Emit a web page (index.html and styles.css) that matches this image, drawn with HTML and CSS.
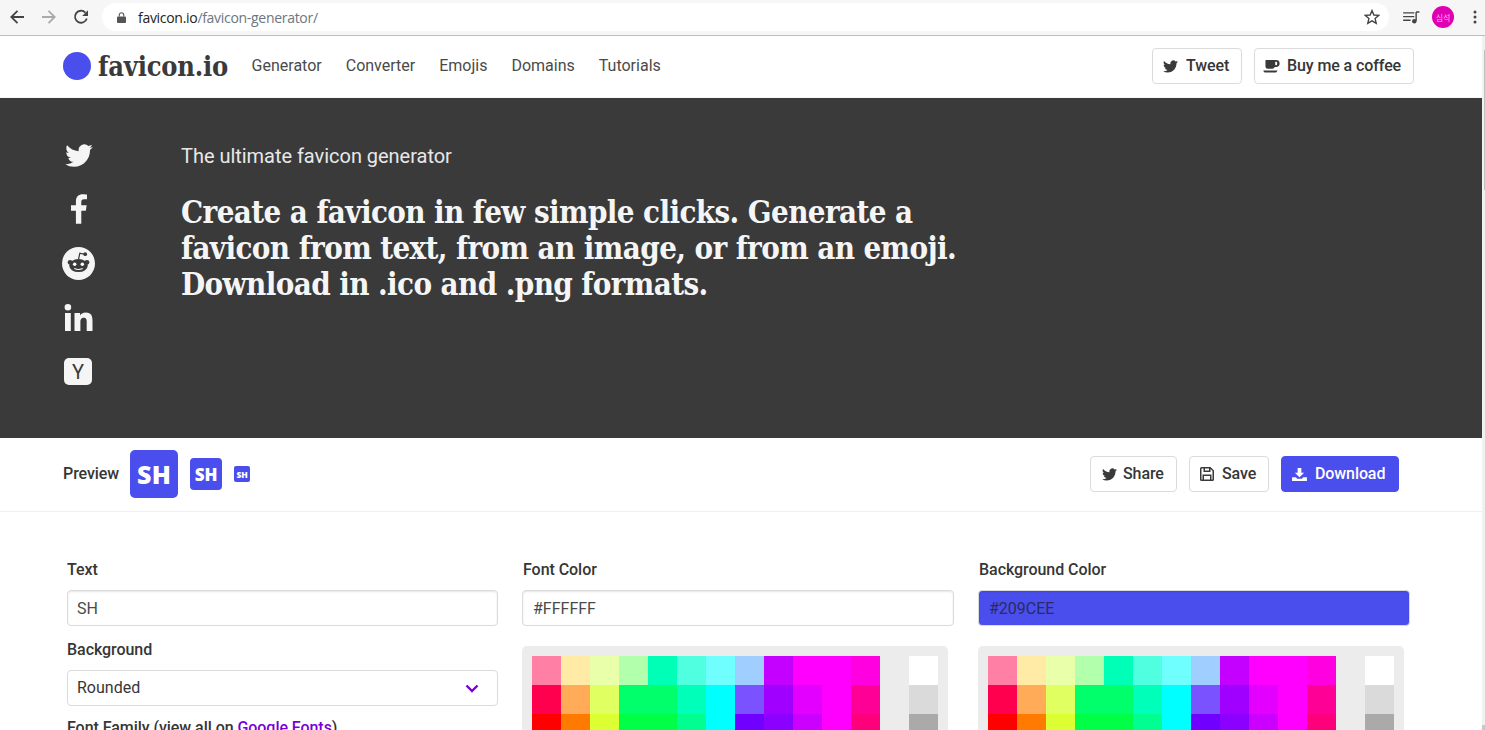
FILE: index.html
```html
<!DOCTYPE html>
<html lang="en">
<head>
<meta charset="utf-8">
<title>favicon.io</title>
<link rel="stylesheet" href="styles.css">
</head>
<body>
<div class="window">
  <header class="browser">
    <div class="browser-nav">
      <svg class="bicon" viewBox="0 0 16 16"><path d="M15 8H2.500M8.500 1.800 2.300 8l6.200 6.200" fill="none" stroke="#444" stroke-width="1.800"/></svg>
      <svg class="bicon" viewBox="0 0 16 16"><path d="M1 8h12.500M7.500 1.800 13.700 8l-6.200 6.200" fill="none" stroke="#aaa" stroke-width="1.800"/></svg>
      <svg class="bicon" viewBox="0 0 16 16"><path d="M13.800 9.400A6 6 0 1 1 12.400 3.600" fill="none" stroke="#444" stroke-width="1.800"/><path d="M15 1.200V7H9.200Z" fill="#444"/></svg>
    </div>
    <div class="omnibox">
      <svg class="lock" viewBox="0 0 10 12"><path d="M1 5h8a1 1 0 0 1 1 1v5a1 1 0 0 1-1 1H1a1 1 0 0 1-1-1V6a1 1 0 0 1 1-1Z" fill="#555"/><path d="M2.500 5V3.300a2.500 2.500 0 0 1 5 0V5" fill="none" stroke="#555" stroke-width="1.200"/></svg>
      <span class="url"><span class="url-host">favicon.io</span>/favicon-generator/</span>
      <svg class="star" viewBox="0 0 16 16"><path d="M8 1.600 9.900 6l4.800.4-3.600 3.200 1.100 4.700L8 11.800l-4.200 2.500 1.100-4.700-3.600-3.200L6.100 6Z" fill="none" stroke="#444" stroke-width="1.400"/></svg>
    </div>
    <svg class="queue" viewBox="0 0 18 14"><path d="M0 2h12M0 6h12M0 10h8" fill="none" stroke="#444" stroke-width="1.500"/><path d="M14 1h3.500M14 1v9.500" fill="none" stroke="#444" stroke-width="1.500"/><circle cx="12" cy="11" r="2.400" fill="#444"/></svg>
    <div class="avatar">심석</div>
    <svg class="kebab" viewBox="0 0 4 14"><circle cx="2" cy="2" r="1.500" fill="#444"/><circle cx="2" cy="7" r="1.500" fill="#444"/><circle cx="2" cy="12" r="1.500" fill="#444"/></svg>
  </header>

  <div class="viewport">
    <main class="page">
      <nav class="topnav">
        <div class="brand"><span class="brand-dot"></span><span class="brand-name">favicon.io</span></div>
        <a class="navlink">Generator</a>
        <a class="navlink">Converter</a>
        <a class="navlink">Emojis</a>
        <a class="navlink">Domains</a>
        <a class="navlink">Tutorials</a>
        <div class="nav-actions">
          <a class="btn btn-tweet"><svg class="ic-tw" viewBox="0 0 24 24"><use href="#bird"/></svg>Tweet</a>
          <a class="btn btn-coffee"><svg class="ic-coffee" viewBox="0 0 18 14"><path d="M3 0h11a3.500 3.500 0 0 1 0 7.500h-1.500A3 3 0 0 1 10 9.500H5A2.500 2.500 0 0 1 2.500 7V.5Z" fill="#3a3a3a"/><path d="M0 11.300h15.500l-1 1.700a1 1 0 0 1-.8.400H1.800a1 1 0 0 1-.8-.4Z" fill="#3a3a3a"/><rect x="13" y="2" width="2" height="3.500" fill="#fff"/></svg>Buy me a coffee</a>
        </div>
      </nav>

      <section class="hero">
        <div class="socials">
          <svg class="soc soc-tw" viewBox="0 2 24 20"><path id="bird" fill="currentColor" d="M23.950 4.570a10 10 0 0 1-2.820.770 4.960 4.960 0 0 0 2.160-2.720c-.950.550-2 .950-3.130 1.180a4.920 4.920 0 0 0-8.380 4.480C7.690 8.100 4.070 6.130 1.640 3.160a4.820 4.820 0 0 0-.670 2.480c0 1.710.870 3.210 2.190 4.100a4.900 4.900 0 0 1-2.230-.620v.060a4.920 4.920 0 0 0 3.950 4.830 5 5 0 0 1-2.210.080 4.940 4.940 0 0 0 4.610 3.420A9.870 9.870 0 0 1 0 19.540a14 14 0 0 0 7.560 2.210c9.050 0 14-7.500 14-13.980 0-.210 0-.420-.020-.630a9.940 9.940 0 0 0 2.460-2.550Z"/></svg>
          <svg class="soc soc-fb" viewBox="0 0 14 26"><path fill="currentColor" d="M9 26V14.500h4l.7-4.700H9V6.800C9 5.400 9.600 4.400 11.400 4.400H14V.3C13.400.2 12 0 10.400 0 6.700 0 4.300 2.200 4.300 6.300v3.500H0v4.700h4.300V26Z"/></svg>
          <svg class="soc soc-rd" viewBox="0 0 32 32"><circle cx="16" cy="16" r="16" fill="currentColor"/><circle cx="7.800" cy="14.800" r="2.300" fill="#3a3a3a"/><circle cx="24.200" cy="14.800" r="2.300" fill="#3a3a3a"/><ellipse cx="16" cy="18" rx="9" ry="6.300" fill="#3a3a3a"/><circle cx="12.300" cy="16.800" r="1.700" fill="#fff"/><circle cx="19.700" cy="16.800" r="1.700" fill="#fff"/><path d="M12 20.800c2.500 1.300 5.500 1.300 8 0" fill="none" stroke="#fff" stroke-width="1.100"/><path d="M16 12 17.300 6l4 1" fill="none" stroke="#3a3a3a" stroke-width="1.200"/><circle cx="22.500" cy="7" r="1.800" fill="#3a3a3a"/></svg>
          <svg class="soc soc-in" viewBox="0 0 28 27"><path fill="currentColor" d="M.5 9h5.800v18H.5ZM3.400 0a3.300 3.300 0 1 1 0 6.600 3.300 3.300 0 0 1 0-6.600ZM10 9h5.500v2.500c.9-1.600 2.900-3 5.700-3 5.900 0 6.800 3.800 6.800 8.800V27h-5.800v-8.600c0-2.100 0-4.700-2.900-4.700s-3.400 2.200-3.400 4.600V27H10Z"/></svg>
          <div class="soc-y">Y</div>
        </div>
        <div class="hero-copy">
          <p class="hero-sub">The ultimate favicon generator</p>
          <h1 class="hero-title">Create a favicon in few simple clicks. Generate a favicon from text, from an image, or from an emoji. Download in .ico and .png formats.</h1>
        </div>
      </section>

      <section class="previewbar">
        <span class="preview-label">Preview</span>
        <span class="fav fav-lg">SH</span>
        <span class="fav fav-md">SH</span>
        <span class="fav fav-sm">SH</span>
        <div class="preview-actions">
          <a class="btn btn-share"><svg class="ic-tw" viewBox="0 0 24 24"><use href="#bird"/></svg>Share</a>
          <a class="btn btn-save"><svg class="ic-save" viewBox="0 0 14 14"><path fill="#3a3a3a" fill-rule="evenodd" d="M1.500 0H10.500L14 3.500V12.500A1.500 1.500 0 0 1 12.500 14H1.500A1.500 1.500 0 0 1 0 12.500V1.500A1.500 1.500 0 0 1 1.500 0ZM1.500 1.500V12.500H2.500V7.500H11.500V12.500H12.500V4.100L10.500 2.100V5H3.500V1.500ZM5 1.500V3.500H9V1.500ZM4 9V12.500H10V9Z"/></svg>Save</a>
          <a class="btn btn-download"><svg class="ic-dl" viewBox="0 0 16 14"><path d="M6 0h4v5h3L8 10 3 5h3Z" fill="#fff"/><path d="M0 10h4l1.500 1.500h5L12 10h4v4H0Z" fill="#fff"/></svg>Download</a>
        </div>
      </section>

      <section class="form">
        <div class="col">
          <label class="flabel">Text</label>
          <div class="field">SH</div>
          <label class="flabel">Background</label>
          <div class="field field-select">Rounded<svg class="chev" viewBox="0 0 14 9"><path d="M1.500 1.500 7 7l5.500-5.500" fill="none" stroke="#7a00d6" stroke-width="2.400"/></svg></div>
          <label class="flabel">Font Family (view all on <a class="link">Google Fonts</a>)</label>
        </div>
        <div class="col col-color">
          <label class="flabel">Font Color</label>
          <div class="field field-wide">#FFFFFF</div>
          <div class="palette">
            <div class="swatches">
              <i style="background:#ff80a4"></i><i style="background:#ffeaa6"></i><i style="background:#eaffaa"></i><i style="background:#b2ffac"></i><i style="background:#00ffb6"></i><i style="background:#50ffdf"></i><i style="background:#70ffff"></i><i style="background:#a0cfff"></i><i style="background:#c400ff"></i><i style="background:#ff00ff"></i><i style="background:#ff00ff"></i><i style="background:#ff00e0"></i>
              <i style="background:#ff004f"></i><i style="background:#ffab57"></i><i style="background:#e0ff60"></i><i style="background:#00ff6a"></i><i style="background:#00ff6a"></i><i style="background:#00ffb8"></i><i style="background:#00ffff"></i><i style="background:#7a52ff"></i><i style="background:#a000ff"></i><i style="background:#e400ff"></i><i style="background:#ff00ff"></i><i style="background:#ff0096"></i>
              <i style="background:#ff0000"></i><i style="background:#ff7a00"></i><i style="background:#dcff33"></i><i style="background:#00ff46"></i><i style="background:#00ff46"></i><i style="background:#00ff90"></i><i style="background:#00ffff"></i><i style="background:#7000ff"></i><i style="background:#8c00ff"></i><i style="background:#cc00ff"></i><i style="background:#ff00ff"></i><i style="background:#ff007c"></i>
            </div>
            <div class="grays"><i style="background:#ffffff"></i><i style="background:#dadada"></i><i style="background:#aaaaaa"></i></div>
          </div>
        </div>
        <div class="col col-color">
          <label class="flabel">Background Color</label>
          <div class="field field-wide field-bg">#209CEE</div>
          <div class="palette">
            <div class="swatches">
              <i style="background:#ff80a4"></i><i style="background:#ffeaa6"></i><i style="background:#eaffaa"></i><i style="background:#b2ffac"></i><i style="background:#00ffb6"></i><i style="background:#50ffdf"></i><i style="background:#70ffff"></i><i style="background:#a0cfff"></i><i style="background:#c400ff"></i><i style="background:#ff00ff"></i><i style="background:#ff00ff"></i><i style="background:#ff00e0"></i>
              <i style="background:#ff004f"></i><i style="background:#ffab57"></i><i style="background:#e0ff60"></i><i style="background:#00ff6a"></i><i style="background:#00ff6a"></i><i style="background:#00ffb8"></i><i style="background:#00ffff"></i><i style="background:#7a52ff"></i><i style="background:#a000ff"></i><i style="background:#e400ff"></i><i style="background:#ff00ff"></i><i style="background:#ff0096"></i>
              <i style="background:#ff0000"></i><i style="background:#ff7a00"></i><i style="background:#dcff33"></i><i style="background:#00ff46"></i><i style="background:#00ff46"></i><i style="background:#00ff90"></i><i style="background:#00ffff"></i><i style="background:#7000ff"></i><i style="background:#8c00ff"></i><i style="background:#cc00ff"></i><i style="background:#ff00ff"></i><i style="background:#ff007c"></i>
            </div>
            <div class="grays"><i style="background:#ffffff"></i><i style="background:#dadada"></i><i style="background:#aaaaaa"></i></div>
          </div>
        </div>
      </section>
    </main>
    <div class="scrollbar"><div class="scroll-thumb"></div><div class="scroll-end"></div></div>
  </div>
</div>
</body>
</html>
```

FILE: styles.css
```css
* { box-sizing: border-box; }
html, body { margin: 0; height: 100%; overflow: hidden; background: #fff; }
body { font-family: Roboto, "Liberation Sans", sans-serif; color: #3a3a3a; }
.window { height: 730px; display: flex; flex-direction: column; overflow: hidden; }

.browser { height: 36px; flex: none; display: flex; align-items: center; background: #f6f6f6; border-bottom: 1px solid #bdbdbd; padding-bottom: 1px; }
.browser-nav { display: flex; gap: 16px; padding-left: 9px; width: 102px; flex: none; }
.bicon { width: 16px; height: 16px; }
.omnibox { width: 1287px; height: 28px; flex: none; display: flex; align-items: center; background: #fff; border-radius: 14px; padding: 0 9px 0 15px; }
.lock { width: 9px; height: 11px; }
.url { margin-left: 12px; font: 14px "Open Sans", "Noto Sans", sans-serif; color: #6b7680; letter-spacing: -0.3px; }
.url-host { color: #222; }
.star { width: 16px; height: 16px; margin-left: auto; }
.queue { width: 17px; height: 13px; margin-left: 14px; }
.avatar { width: 22px; height: 22px; margin-left: 12px; border-radius: 50%; background: #e000b4; color: #ffb0e8; font: 8px "Noto Sans CJK KR", sans-serif; display: flex; align-items: center; justify-content: center; }
.kebab { width: 4px; height: 14px; margin-left: 19px; }

.viewport { flex: 1; display: flex; min-height: 0; }
.page { flex: 1; min-width: 0; }
.scrollbar { width: 3px; flex: none; background: #f1f1f1; display: flex; flex-direction: column; align-items: flex-end; }
.scroll-thumb { width: 1px; height: 140px; margin-top: 14px; background: #c1c1c1; }
.scroll-end { width: 3px; height: 5px; margin-top: auto; background: #c8c8c8; }

.topnav { height: 61px; display: flex; align-items: center; padding: 0 68px 1px 63px; background: #fff; }
.brand { display: flex; align-items: center; width: 188.600px; flex: none; }
.brand-dot { width: 28px; height: 28px; border-radius: 50%; background: #4a4eec; }
.brand-name { margin-left: 7px; font: 700 27px "DejaVu Serif Condensed", "DejaVu Serif", serif; letter-spacing: -0.2px; color: #3a3a3a; }
.navlink { font-size: 16px; color: #4a4a4a; margin-right: 24px; padding-bottom: 2px; }
.nav-actions { margin-left: auto; display: flex; gap: 12px; }
.btn { height: 36px; display: inline-flex; align-items: center; border: 1px solid #dbdbdb; border-radius: 4px; background: #fff; color: #363636; font-size: 16px; font-weight: 500; letter-spacing: -0.1px; padding: 0 10px 2px; white-space: nowrap; }
.btn-tweet { width: 90px; }
.btn-coffee { width: 160px; padding-left: 8px; }
.ic-tw { width: 15px; height: 15px; margin: 2px 8px 0 0; color: #3a3a3a; }
.ic-coffee { width: 17px; height: 13px; margin: 2px 7px 0 0; }

.hero { height: 341px; display: flex; background: #3a3a3a; border-top: 1px solid #f5f5f5; color: #fff; padding-left: 63px; }
.socials { width: 118px; flex: none; display: flex; flex-direction: column; align-items: flex-start; padding-top: 46px; }
.soc { color: #f5f5f5; display: block; }
.soc-tw { width: 28px; height: 23px; margin-left: 2px; }
.soc-fb { width: 16px; height: 30px; margin: 27px 0 0 8px; }
.soc-rd { width: 33px; height: 33px; margin: 23px 0 0 -1px; }
.soc-in { width: 29px; height: 27px; margin: 24px 0 0 1px; }
.soc-y { width: 28px; height: 27px; margin: 27px 0 0 1px; background: #f5f5f5; border-radius: 5px; color: #3a3a3a; font-size: 20px; display: flex; align-items: center; justify-content: center; }
.hero-copy { padding-top: 46px; width: 780px; }
.hero-sub { margin: 0; font-size: 20px; line-height: 25px; letter-spacing: -0.03px; color: #e8e8e8; }
.hero-title { margin: 25px 0 0; font: 700 31px/36px "DejaVu Serif Condensed", "DejaVu Serif", serif; letter-spacing: -0.6px; color: #f5f5f5; }

.previewbar { height: 74px; display: flex; align-items: center; padding: 0 83px 1px 63px; border-bottom: 1px solid #f0f0f0; background: #fff; }
.preview-label { font-size: 16px; font-weight: 500; letter-spacing: -0.07px; color: #363636; margin-right: 11px; padding-bottom: 2px; }
.fav { display: flex; align-items: center; justify-content: center; background: #4a4eec; color: #fff; font-family: "Open Sans", sans-serif; font-weight: 800; flex: none; }
.fav-lg { width: 48px; height: 48px; border-radius: 5px; font-size: 25px; letter-spacing: .5px; }
.fav-md { width: 32px; height: 32px; border-radius: 4px; font-size: 17px; margin-left: 12px; }
.fav-sm { width: 16px; height: 16px; border-radius: 2px; font-size: 8.500px; margin-left: 12px; }
.preview-actions { margin-left: auto; display: flex; gap: 12px; }
.btn-share { width: 87px; padding-left: 11px; }
.btn-share .ic-tw { margin-right: 6px; }
.btn-save { width: 80px; }
.btn-download { width: 118px; background: #4a4eec; border-color: #4a4eec; color: #fff; }
.ic-save { width: 14px; height: 14px; margin: 2px 8px 0 0; }
.ic-dl { width: 15px; height: 13px; margin: 2px 8px 0 0; }

.form { display: grid; grid-template-columns: 431px 432px 432px; column-gap: 24px; padding: 48px 0 0 67px; background: #fff; }
.flabel { display: block; font-size: 16px; font-weight: 500; letter-spacing: -0.05px; color: #363636; line-height: 20px; height: 20px; margin-bottom: 10px; }
.col-color .flabel { padding-left: 1px; }
.field { height: 36px; border: 1px solid #dbdbdb; border-radius: 4px; box-shadow: inset 0 1px 2px rgba(10,10,10,.1); display: flex; align-items: center; padding: 0 9px; font-size: 16px; color: #4a4a4a; margin-bottom: 14px; }
.field-select { box-shadow: none; justify-content: space-between; color: #363636; margin-bottom: 12px; padding-bottom: 2px; }
.chev { width: 14px; height: 9px; margin: 2px 9px 0 0; }
.field-wide { margin-bottom: 20px; padding: 0 10px; }
.field-bg { background: #4a4eec; color: #2a2a60; }
.link { color: #7a00d6; }
.palette { width: 426px; height: 200px; background: #ececec; border-radius: 5px; padding: 10px; display: flex; justify-content: space-between; }
.swatches { display: grid; grid-template-columns: repeat(12, 29px); grid-auto-rows: 29px; }
.grays { display: grid; grid-template-columns: 29px; grid-auto-rows: 29px; }
.swatches i, .grays i { display: block; }
```
